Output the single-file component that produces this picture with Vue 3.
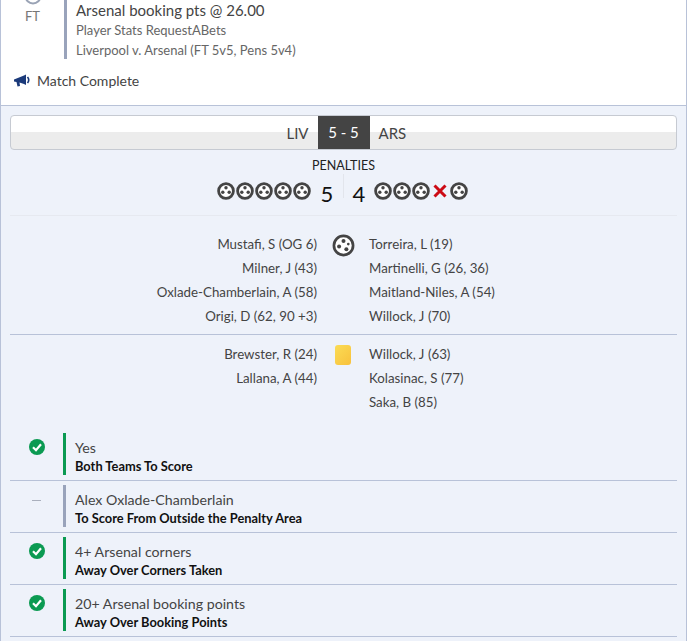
<script setup>
const scorers = {
  left: ['Mustafi, S (OG 6)', 'Milner, J (43)', 'Oxlade-Chamberlain, A (58)', 'Origi, D (62, 90 +3)'],
  right: ['Torreira, L (19)', 'Martinelli, G (26, 36)', 'Maitland-Niles, A (54)', 'Willock, J (70)']
}
const cards = {
  left: ['Brewster, R (24)', 'Lallana, A (44)'],
  right: ['Willock, J (63)', 'Kolasinac, S (77)', 'Saka, B (85)']
}
const bets = [
  { title: 'Yes', sub: 'Both Teams To Score', won: true },
  { title: 'Alex Oxlade-Chamberlain', sub: 'To Score From Outside the Penalty Area', won: false },
  { title: '4+ Arsenal corners', sub: 'Away Over Corners Taken', won: true },
  { title: '20+ Arsenal booking points', sub: 'Away Over Booking Points', won: true }
]
const rightPens = [true, true, true, false, true]
</script>

<template>
  <div class="page">
    <section class="head">
      <div class="bet">
        <div class="status">
          <svg class="status-icon" width="18" height="18" viewBox="0 0 18 18"><circle cx="9" cy="9" r="7.5" fill="none" stroke="#9aa3b5" stroke-width="2"/></svg>
          <span>FT</span>
        </div>
        <div class="bet-text">
          <div class="bet-title">Arsenal booking pts @ 26.00</div>
          <div class="bet-line">Player Stats RequestABets</div>
          <div class="bet-line">Liverpool v. Arsenal (FT 5v5, Pens 5v4)</div>
        </div>
      </div>
      <div class="complete">
        <svg width="18" height="14" viewBox="0 0 18 14">
          <path d="M1 5.5 L11 1.5 L13 0.5 L13 11 L11 10 L6.5 8.5 L7 12 L4.5 12.5 L3.5 8 L1 7.5 Z" fill="#1b3a7a"/>
          <path d="M14.5 3 Q17 6 14.5 9" fill="none" stroke="#1b3a7a" stroke-width="1.6"/>
        </svg>
        <span>Match Complete</span>
      </div>
    </section>

    <section class="stats">
      <div class="scorebar">
        <span class="team team-l">LIV</span>
        <span class="score">5 - 5</span>
        <span class="team team-r">ARS</span>
      </div>

      <div class="pen-title">PENALTIES</div>
      <div class="pens">
        <div class="pen-side pen-l">
          <svg v-for="n in 5" :key="n" class="ball" viewBox="0 0 18 18">
            <circle cx="9" cy="9" r="7.4" fill="#fff" stroke="#444" stroke-width="2.8"/>
            <circle cx="9" cy="5.8" r="1.7" fill="#444"/>
            <circle cx="5.8" cy="10.2" r="1.7" fill="#444"/>
            <circle cx="12.2" cy="10.2" r="1.7" fill="#444"/>
          </svg>
          <span class="pen-num pen-num-l">5</span>
        </div>
        <div class="pen-side pen-r">
          <span class="pen-num pen-num-r">4</span>
          <template v-for="(ok, i) in rightPens" :key="i">
            <svg v-if="ok" class="ball" viewBox="0 0 18 18">
              <circle cx="9" cy="9" r="7.4" fill="#fff" stroke="#444" stroke-width="2.8"/>
              <circle cx="9" cy="5.8" r="1.7" fill="#444"/>
              <circle cx="5.8" cy="10.2" r="1.7" fill="#444"/>
              <circle cx="12.2" cy="10.2" r="1.7" fill="#444"/>
            </svg>
            <svg v-else class="ball" viewBox="0 0 18 18">
              <path d="M3.5 3.5 L14.5 14.5 M14.5 3.5 L3.5 14.5" stroke="#cc0a14" stroke-width="3"/>
            </svg>
          </template>
        </div>
      </div>

      <div class="events events-goals">
        <div class="col col-l"><div v-for="s in scorers.left" :key="s" class="ev">{{ s }}</div></div>
        <div class="mid">
          <svg width="23" height="23" viewBox="0 0 24 24">
            <circle cx="12" cy="12" r="10" fill="#fff" stroke="#444" stroke-width="2.8"/>
            <circle cx="12" cy="7.2" r="2.1" fill="#444"/>
            <circle cx="7.4" cy="13" r="2.1" fill="#444"/>
            <circle cx="15" cy="16" r="2.1" fill="#444"/>
            <circle cx="17" cy="10.5" r="1.4" fill="#444"/>
          </svg>
        </div>
        <div class="col col-r"><div v-for="s in scorers.right" :key="s" class="ev">{{ s }}</div></div>
      </div>

      <div class="events events-cards">
        <div class="col col-l"><div v-for="s in cards.left" :key="s" class="ev">{{ s }}</div></div>
        <div class="mid"><span class="card"></span></div>
        <div class="col col-r"><div v-for="s in cards.right" :key="s" class="ev">{{ s }}</div></div>
      </div>

      <div class="legs">
        <div v-for="b in bets" :key="b.title" class="leg">
          <div class="leg-icon">
            <svg v-if="b.won" width="18" height="18" viewBox="0 0 18 18">
              <circle cx="9" cy="9" r="8" fill="#0b9a52"/>
              <path d="M5 9.2 L8 12.2 L13 6.2" fill="none" stroke="#fff" stroke-width="2.2"/>
            </svg>
            <span v-else class="dash"></span>
          </div>
          <div class="leg-body" :class="{ lost: !b.won }">
            <div class="leg-title">{{ b.title }}</div>
            <div class="leg-sub">{{ b.sub }}</div>
          </div>
        </div>
      </div>
    </section>
  </div>
</template>

<style>
html, body { margin: 0; padding: 0; background: #fff; overflow: hidden; }
</style>

<style scoped>
.page {
  width: 687px;
  height: 641px;
  box-sizing: border-box;
  border-left: 1px solid #b8c2d8;
  border-right: 1px solid #b8c2d8;
  font-family: Lato, "Open Sans", sans-serif;
  color: #444;
  overflow: hidden;
  background: #eef2fa;
}
.head {
  height: 106px;
  box-sizing: border-box;
  background: #fff;
  border-bottom: 1px solid #b8c2d8;
  overflow: hidden;
}
.bet { display: flex; height: 59px; }
.status {
  width: 63px;
  display: flex;
  flex-direction: column;
  align-items: center;
  margin-top: -13px;
  font-size: 13px;
  color: #777;
  flex: none;
}
.status-icon { margin-bottom: 1px; }
.status span { line-height: 20px; }
.bet-text { border-left: 3px solid #99a3bb; padding-left: 9px; flex: 1; }
.bet-title { font-size: 15px; line-height: 20px; color: #444; }
.bet-line { font-size: 13px; line-height: 19px; color: #666; margin-top: 1px; }
.complete {
  display: flex;
  align-items: center;
  gap: 6px;
  padding: 13px 0 0 12px;
  font-size: 14px;
  line-height: 18px;
  color: #444;
}
.stats { padding: 9px 9px 0; }
.scorebar {
  height: 35px;
  box-sizing: border-box;
  border: 1px solid #c6cad2;
  border-radius: 4px;
  background: linear-gradient(#fff 0 50%, #ececec 50% 100%);
  display: grid;
  grid-template-columns: 1fr 52px 1fr;
  align-items: center;
  font-size: 15px;
}
.team-l { text-align: right; padding-right: 9px; }
.team-r { padding-left: 9px; }
.score {
  background: #444;
  color: #fff;
  height: 33px;
  line-height: 33px;
  text-align: center;
  font-size: 15px;
}
.pen-title { text-align: center; font-size: 12.5px; line-height: 16px; color: #222; margin-top: 8px; }
.pens {
  display: grid;
  grid-template-columns: 1fr 1fr;
  height: 41px;
  border-bottom: 1px solid #e6e9f0;
  box-sizing: content-box;
}
.pen-side { display: flex; align-items: flex-start; padding-top: 1px; height: 24px; }
.pen-l { justify-content: flex-end; border-right: 1px solid #e2e5ec; box-sizing: border-box; }
.ball { width: 18px; height: 18px; margin-right: 1px; flex: none; margin-top: 7px; }
.pen-num { font-size: 22px; line-height: 26px; color: #111; width: 12px; text-align: center; margin-top: 6px; }
.pen-num-l { margin-left: 9px; margin-right: 10px; }
.pen-num-r { margin-left: 9px; margin-right: 9px; }
.events { display: grid; grid-template-columns: 307px 52px 1fr; font-size: 13.3px; color: #444; }
.events-goals { padding-top: 16px; padding-bottom: 6px; border-bottom: 1px solid #b8c2d8; }
.events-cards { padding-top: 7px; height: 80px; }
.col-l { text-align: right; }
.ev { height: 24px; line-height: 24px; }
.mid { display: flex; justify-content: center; padding-top: 2px; }
.card {
  width: 16px;
  height: 20px;
  border-radius: 3px;
  background: linear-gradient(135deg, #fbdc55, #f8c13c);
  margin-top: 1px;
}
.legs { margin-top: 7px; }
.leg {
  height: 52px;
  box-sizing: border-box;
  border-bottom: 1px solid #b8c2d8;
  display: flex;
  padding-top: 4px;
}
.leg-icon { width: 53px; display: flex; justify-content: center; padding-top: 5px; flex: none; }
.dash { width: 9px; height: 1px; background: #aab0bd; margin-top: 10px; }
.leg-body { border-left: 3px solid #0b9a52; height: 42px; padding-left: 9px; flex: 1; }
.leg-body.lost { border-left-color: #99a3bb; }
.leg-title { font-size: 14.2px; line-height: 20px; margin-top: 5px; color: #444; }
.leg-sub { font-size: 12.85px; font-weight: 700; line-height: 16px; color: #111; }
</style>
